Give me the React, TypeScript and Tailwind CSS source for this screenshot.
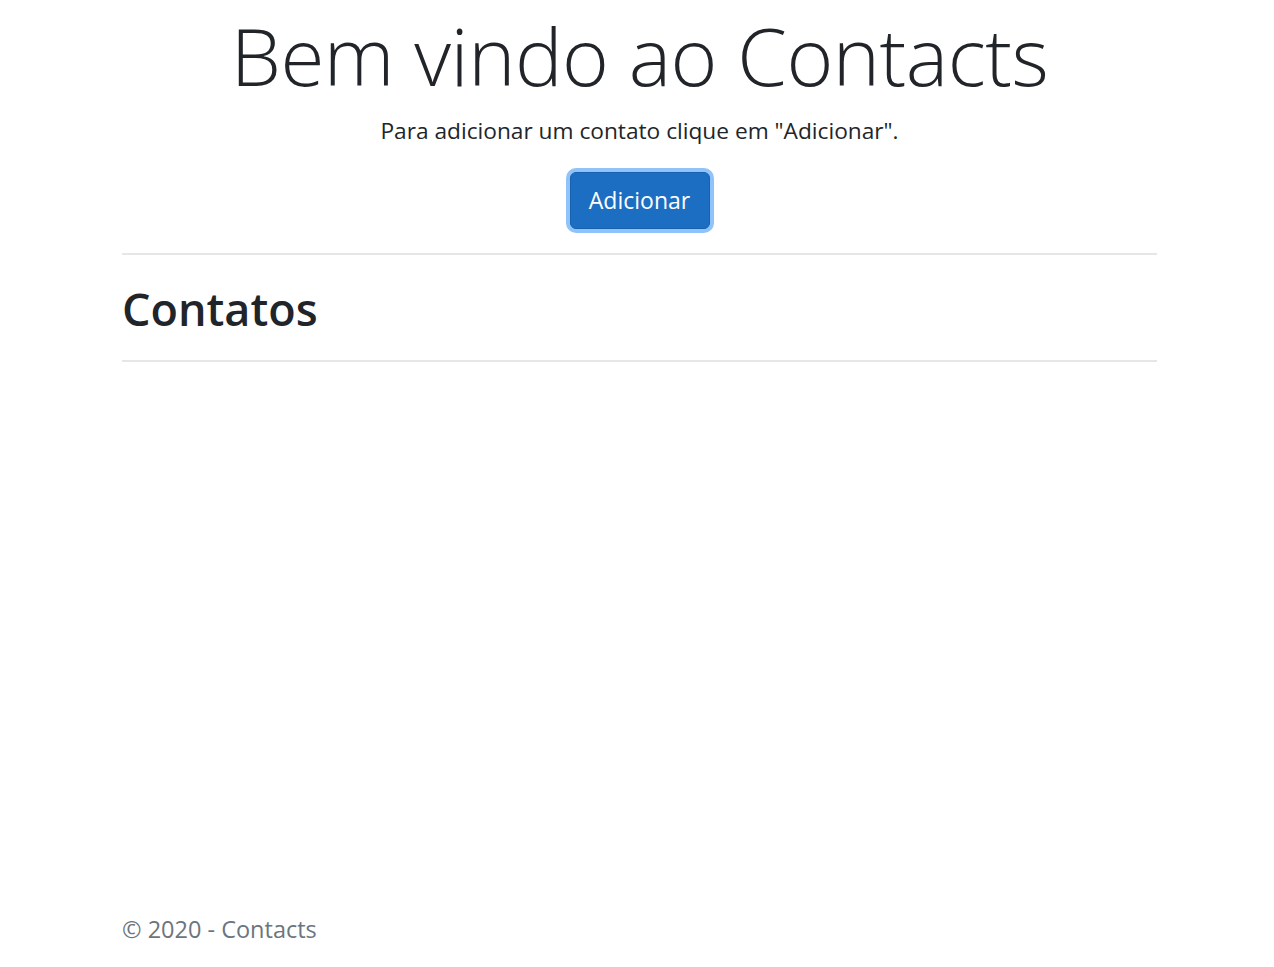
export default function App() {
  return (
    <div className="relative min-h-[967px] bg-white text-[#212529] [font-family:'Open_Sans','Noto_Sans',sans-serif]">
      <div className="ml-[122px] w-[1035px]">
        <div className="flex flex-col items-center">
          <h1 className="text-[80px] font-light leading-[110px] tracking-[-0.5px]">Bem vindo ao Contacts</h1>
          <p className="mt-[3px] text-[22.7px] leading-[36px]">Para adicionar um contato clique em "Adicionar".</p>
          <button className="mt-[23px] flex h-[57px] w-[140px] items-center justify-center rounded-[6px] border border-[#1861ac] bg-[#1b6ec2] text-[23px] text-white shadow-[0_0_0_4px_#8fc3f9]">
            Adicionar
          </button>
        </div>
        <div className="mt-[24px] h-[2px] bg-[#e6e6e6]" />
        <h2 className="mt-[25px] text-[45px] font-semibold leading-[58px]">Contatos</h2>
        <div className="mt-[22px] h-[1.5px] bg-[#e6e6e6]" />
      </div>
      <footer className="absolute bottom-0 left-0 right-0">
        <div className="ml-[122px] w-[1035px] text-[23.5px] leading-[76px] text-[#6c757d]">© 2020 - Contacts</div>
      </footer>
    </div>
  );
}
